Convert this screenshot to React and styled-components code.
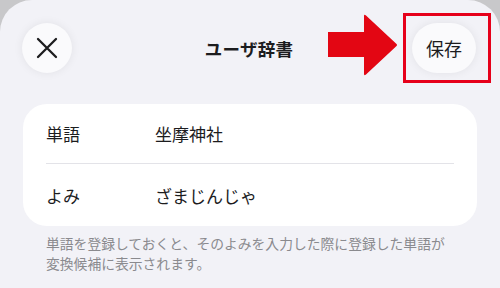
import React from 'react'
import styled, { createGlobalStyle } from 'styled-components'

const Global = createGlobalStyle`
  html, body {
    margin: 0;
    padding: 0;
    background: #c8c8ca;
  }
  body {
    font-family: "Noto Sans CJK JP", "Noto Sans", sans-serif;
    -webkit-font-smoothing: antialiased;
  }
`

const Screen = styled.div`
  position: relative;
  width: 500px;
  height: 288px;
  overflow: hidden;
  background: #c8c8ca;
`

const Sheet = styled.div`
  height: 100%;
  background: #f2f2f7;
  border-radius: 32px 32px 0 0;
`

const Header = styled.div`
  display: grid;
  grid-template-columns: 1fr auto 1fr;
  align-items: center;
  padding: 23px 24px 0 22px;
  height: 50px;
`

const RoundButton = styled.button`
  display: flex;
  align-items: center;
  justify-content: center;
  justify-self: ${(p) => (p.$end ? 'end' : 'start')};
  width: ${(p) => p.$w || 50}px;
  height: 50px;
  padding: 0;
  border: none;
  border-radius: 25px;
  background: #fafafc;
  box-shadow: 0 0 10px rgba(0, 0, 0, 0.07);
  color: #1c1c1e;
  font-family: inherit;
  font-size: 18px;
  cursor: pointer;
`

const Title = styled.div`
  font-size: 17.5px;
  font-weight: 700;
  color: #1c1c1e;
  letter-spacing: 0.3px;
`

const Card = styled.div`
  margin: 31px 23px 0;
  background: #ffffff;
  border-radius: 24px;
  overflow: hidden;
`

const Row = styled.div`
  display: flex;
  align-items: center;
  height: ${(p) => p.$h}px;
  margin: 0 23px;
  border-bottom: ${(p) => (p.$divider ? '1px solid #e3e3e8' : 'none')};
  font-size: 17px;
  color: #1c1c1e;
`

const Label = styled.div`
  width: 109px;
`

const Value = styled.div`
  flex: 1;
`

const Note = styled.p`
  margin: 7px 50px 0 46px;
  font-size: 13.8px;
  line-height: 20px;
  color: #8a8a8e;
`

const Arrow = styled.svg`
  position: absolute;
  left: 328px;
  top: 14px;
`

const Highlight = styled.div`
  position: absolute;
  left: 403px;
  top: 13px;
  width: 88px;
  height: 70px;
  box-sizing: border-box;
  border: 3px solid #e6001a;
`

export default function App() {
  return (
    <Screen>
      <Global />
      <Sheet>
        <Header>
          <RoundButton aria-label="閉じる">
            <svg width="22" height="22" viewBox="0 0 22 22">
              <path
                d="M2 2 L20 20 M20 2 L2 20"
                stroke="#1c1c1e"
                strokeWidth="2.3"
                strokeLinecap="round"
              />
            </svg>
          </RoundButton>
          <Title>ユーザ辞書</Title>
          <RoundButton $w={64} $end>保存</RoundButton>
        </Header>
        <Card>
          <Row $h={59} $divider>
            <Label>単語</Label>
            <Value>坐摩神社</Value>
          </Row>
          <Row $h={62}>
            <Label>よみ</Label>
            <Value>ざまじんじゃ</Value>
          </Row>
        </Card>
        <Note>
          単語を登録しておくと、そのよみを入力した際に登録した単語が変換候補に表示されます。
        </Note>
      </Sheet>
      <Arrow width="70" height="62" viewBox="0 0 70 62">
        <path
          d="M0 18 L36 18 L36 2 Q36 0 38 1.5 L68 29.5 Q70 31 68 32.5 L38 60.5 Q36 62 36 60 L36 43 L0 43 Z"
          fill="#e30613"
        />
      </Arrow>
      <Highlight />
    </Screen>
  )
}
